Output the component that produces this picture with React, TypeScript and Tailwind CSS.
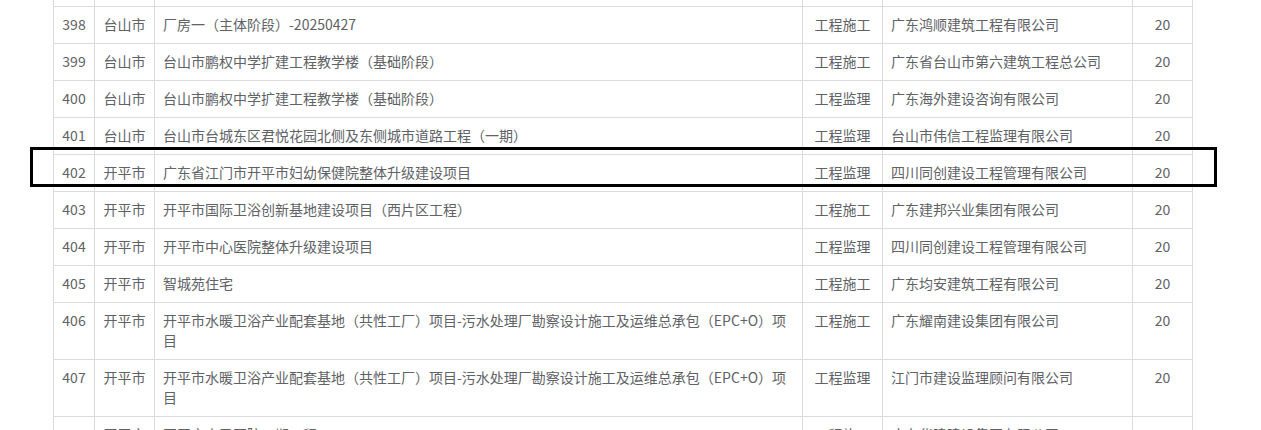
type Row = {
  no: number
  city: string
  name: string
  type: string
  company: string
  score: number
}

const ROWS: Row[] = [
  { no: 397, city: '台山市', name: '台山市台城街道办事处片区道路改造工程', type: '工程施工', company: '广东华辉建设工程有限公司', score: 20 },
  { no: 398, city: '台山市', name: '厂房一（主体阶段）-20250427', type: '工程施工', company: '广东鸿顺建筑工程有限公司', score: 20 },
  { no: 399, city: '台山市', name: '台山市鹏权中学扩建工程教学楼（基础阶段）', type: '工程施工', company: '广东省台山市第六建筑工程总公司', score: 20 },
  { no: 400, city: '台山市', name: '台山市鹏权中学扩建工程教学楼（基础阶段）', type: '工程监理', company: '广东海外建设咨询有限公司', score: 20 },
  { no: 401, city: '台山市', name: '台山市台城东区君悦花园北侧及东侧城市道路工程（一期）', type: '工程监理', company: '台山市伟信工程监理有限公司', score: 20 },
  { no: 402, city: '开平市', name: '广东省江门市开平市妇幼保健院整体升级建设项目', type: '工程监理', company: '四川同创建设工程管理有限公司', score: 20 },
  { no: 403, city: '开平市', name: '开平市国际卫浴创新基地建设项目（西片区工程）', type: '工程施工', company: '广东建邦兴业集团有限公司', score: 20 },
  { no: 404, city: '开平市', name: '开平市中心医院整体升级建设项目', type: '工程监理', company: '四川同创建设工程管理有限公司', score: 20 },
  { no: 405, city: '开平市', name: '智城苑住宅', type: '工程施工', company: '广东均安建筑工程有限公司', score: 20 },
  { no: 406, city: '开平市', name: '开平市水暖卫浴产业配套基地（共性工厂）项目-污水处理厂勘察设计施工及运维总承包（EPC+O）项目', type: '工程施工', company: '广东耀南建设集团有限公司', score: 20 },
  { no: 407, city: '开平市', name: '开平市水暖卫浴产业配套基地（共性工厂）项目-污水处理厂勘察设计施工及运维总承包（EPC+O）项目', type: '工程监理', company: '江门市建设监理顾问有限公司', score: 20 },
  { no: 408, city: '开平市', name: '开平市人民医院二期工程', type: '工程施工', company: '广东华建建设集团有限公司', score: 20 },
]

const cell = 'border border-[#dcdcdc] px-2 pt-[7px] pb-[9px] align-top leading-5'

export default function App() {
  return (
    <div className="relative h-[430px] overflow-hidden bg-white font-['Noto_Sans_CJK_SC','Noto_Sans',sans-serif] text-[14px] text-[#606266]">
      <table className="ml-[53px] mt-[-31px] w-[1140px] table-fixed border-collapse">
        <colgroup>
          <col className="w-[41px]" />
          <col className="w-[60px]" />
          <col className="w-[648px]" />
          <col className="w-[80px]" />
          <col className="w-[250px]" />
          <col className="w-[60px]" />
        </colgroup>
        <tbody>
          {ROWS.map((r) => (
            <tr key={r.no}>
              <td className={`${cell} px-0 text-center`}>{r.no}</td>
              <td className={`${cell} px-0 text-center`}>{r.city}</td>
              <td className={cell}>{r.name}</td>
              <td className={`${cell} px-0 text-center`}>{r.type}</td>
              <td className={cell}>{r.company}</td>
              <td className={`${cell} px-0 text-center`}>{r.score}</td>
            </tr>
          ))}
        </tbody>
      </table>

      {/* highlight box drawn over row 402 */}
      <div className="pointer-events-none absolute left-[30px] top-[147px] h-[40px] w-[1187px] border-[3px] border-black" />
    </div>
  )
}
